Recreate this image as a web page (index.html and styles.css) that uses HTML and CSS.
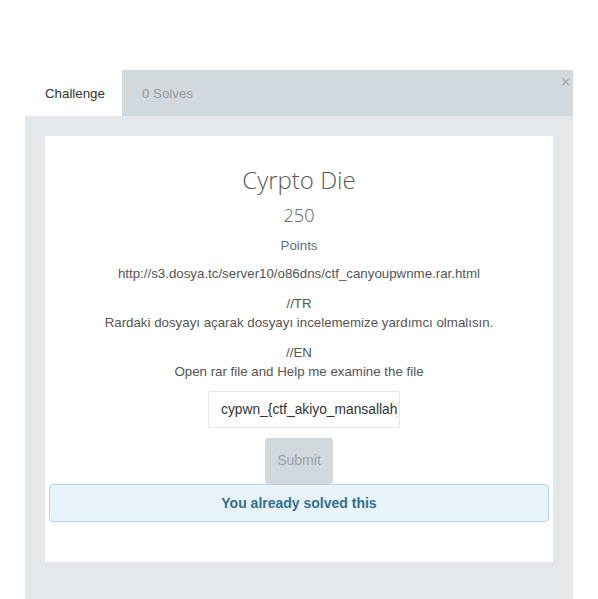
FILE: index.html
```html
<!DOCTYPE html>
<html>
<head>
<meta charset="utf-8">
<link rel="stylesheet" href="styles.css">
</head>
<body>
<div class="modal">
  <div class="tabs">
    <div class="tab active">Challenge</div>
    <div class="tab">0 Solves</div>
    <span class="close">&#215;</span>
  </div>
  <div class="pane">
    <div class="card">
      <h3 class="title">Cyrpto Die</h3>
      <div class="value">250</div>
      <p class="points">Points</p>
      <p class="desc">http://s3.dosya.tc/server10/o86dns/ctf_canyoupwnme.rar.html</p>
      <p class="desc">//TR<br>Rardaki dosyayı açarak dosyayı incelememize yardımcı olmalısın.</p>
      <p class="desc">//EN<br>Open rar file and Help me examine the file</p>
      <input class="answer" type="text" readonly value="cypwn_{ctf_akiyo_mansallah}">
      <div class="btn">Submit</div>
      <div class="alert">You already solved this</div>
    </div>
  </div>
</div>
</body>
</html>
```
FILE: styles.css
```css
html, body {
  margin: 0;
  padding: 0;
  background: #fff;
  font-family: "Liberation Sans", Arial, sans-serif;
  overflow: hidden;
}
.modal {
  margin: 70px 0 0 25px;
  width: 548px;
  background: #e4e8eb;
}
.tabs {
  position: relative;
  display: flex;
  height: 46px;
  background: #d1d9de;
}
.tab {
  padding: 1px 20px 0;
  line-height: 46px;
  font-size: 13.3px;
  color: #999;
}
.tab.active {
  background: #fff;
  color: #333;
  width: 57px;
}
.close {
  position: absolute;
  right: 2px;
  top: 3px;
  font-size: 18px;
  line-height: 18px;
  color: #a8adb0;
}
.pane {
  padding: 20px 20px 40px;
}
.card {
  background: #fff;
  padding: 31px 4px 40px;
  text-align: center;
}
.title {
  margin: 0;
  font-family: "Open Sans", sans-serif;
  font-weight: 300;
  font-size: 24px;
  line-height: 26px;
  color: #5a5a5a;
}
.value {
  margin-top: 12px;
  font-family: "Open Sans", sans-serif;
  font-weight: 300;
  font-size: 18px;
  line-height: 20px;
  color: #5a5a5a;
}
.points {
  margin: 11px 0 9px;
  font-size: 13.3px;
  line-height: 19px;
  color: #5d6d80;
}
.desc {
  margin: 0 0 10px;
  font-size: 13.3px;
  line-height: 19.5px;
  color: #555;
}
.desc:last-of-type {
  margin-bottom: 9px;
}
.answer {
  display: block;
  box-sizing: border-box;
  width: 192px;
  height: 37px;
  margin: 0 0 0 159px;
  padding: 0 1px 0 12px;
  border: 1px solid #e4e6e8;
  border-radius: 2px;
  font-family: "Liberation Sans", Arial, sans-serif;
  font-size: 13.8px;
  color: #333;
  background: #fff;
  outline: none;
}
.btn {
  width: 68px;
  height: 46px;
  margin: 10px auto 0;
  background: #d1d9de;
  border-radius: 3px;
  color: #9aa0a4;
  font-size: 14px;
  line-height: 44px;
}
.alert {
  box-sizing: border-box;
  height: 38px;
  background: #e8f4fa;
  border: 1px solid #b5d6e6;
  border-radius: 4px;
  color: #31708f;
  font-weight: bold;
  font-size: 14px;
  line-height: 36px;
}
```
